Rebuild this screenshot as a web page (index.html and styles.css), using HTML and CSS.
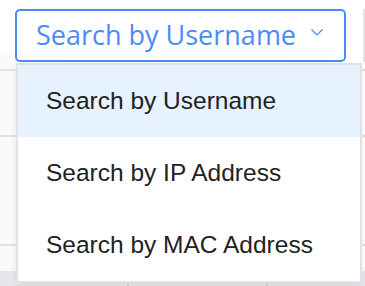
FILE: index.html
```html
<!DOCTYPE html>
<html lang="en">
<head>
    <meta charset="UTF-8">
    <meta name="viewport" content="width=device-width, initial-scale=1.0">
    <title>Search</title>
    <link rel="stylesheet" href="styles.css">
</head>
<body>

    <div class="toolbar">
        <div class="search-select">
            <span class="select-value">Search by Username</span>
            <svg class="chevron" width="12" height="7" viewBox="0 0 12 7">
                <path d="M0.5 0.5 L6 6 L11.5 0.5" fill="none" stroke="#4a8cf6" stroke-width="1.2"/>
            </svg>
        </div>
        <div class="next-control"></div>
    </div>

    <div class="results-table">
        <div class="row row-top"></div>
        <div class="row row-one"></div>
        <div class="row row-two"></div>
        <div class="row row-three"></div>
        <div class="row-head">
            <span class="cell cell-a"></span>
            <span class="cell cell-b"></span>
            <span class="cell cell-c"></span>
        </div>
    </div>

    <ul class="dropdown">
        <li class="option active">Search by Username</li>
        <li class="option">Search by IP Address</li>
        <li class="option">Search by MAC Address</li>
    </ul>

</body>
</html>
```

FILE: styles.css
```css
body {
    margin: 0;
    padding: 0;
    background-color: #fff;
    font-family: "Liberation Sans", Arial, sans-serif;
    position: relative;
    overflow: hidden;
}

.toolbar {
    display: flex;
    gap: 17px;
    padding: 9px 0 0 15px;
    height: 53px;
    box-sizing: border-box;
}

.search-select {
    flex-shrink: 0;
    width: 331px;
    height: 53px;
    box-sizing: border-box;
    border: 2px solid #4a8cf6;
    border-radius: 5px;
    display: flex;
    align-items: center;
    padding: 0 21px 0 19px;
    justify-content: space-between;
}

.select-value {
    font-family: "Open Sans", sans-serif;
    font-size: 27px;
    color: #4a8cf6;
    margin-top: -2px;
}

.chevron {
    margin-top: -6px;
}

.next-control {
    flex-shrink: 0;
    width: 10px;
    height: 53px;
    box-sizing: border-box;
    border-left: 2px solid #e4e4e8;
}

.row {
    border-bottom: 2px solid #dfe0ea;
    background: linear-gradient(90deg, #fafafb, #fff);
}

.row-top {
    height: 16px;
}

.row-one {
    height: 64px;
}

.row-two {
    height: 107px;
}

.row-three {
    height: 25px;
    border-bottom: none;
}

.row-head {
    display: flex;
    height: 20px;
    background-color: #e6e6ec;
}

.cell {
    display: block;
    height: 100%;
}

.cell-a {
    width: 127px;
    border-right: 2px solid #cfd0da;
}

.cell-b {
    width: 137px;
    border-right: 2px solid #cfd0da;
}

.dropdown {
    position: absolute;
    top: 63px;
    left: 16px;
    width: 346px;
    margin: 0;
    padding: 0;
    list-style: none;
    background-color: #fff;
    border: 2px solid #e2e2e2;
    box-sizing: border-box;
    box-shadow: 0 2px 6px rgba(0, 0, 0, 0.08);
}

.option {
    height: 72px;
    display: flex;
    align-items: center;
    padding-left: 28px;
    font-size: 24.5px;
    color: #222;
}

.option.active {
    background-color: #e6f2fe;
}
```
